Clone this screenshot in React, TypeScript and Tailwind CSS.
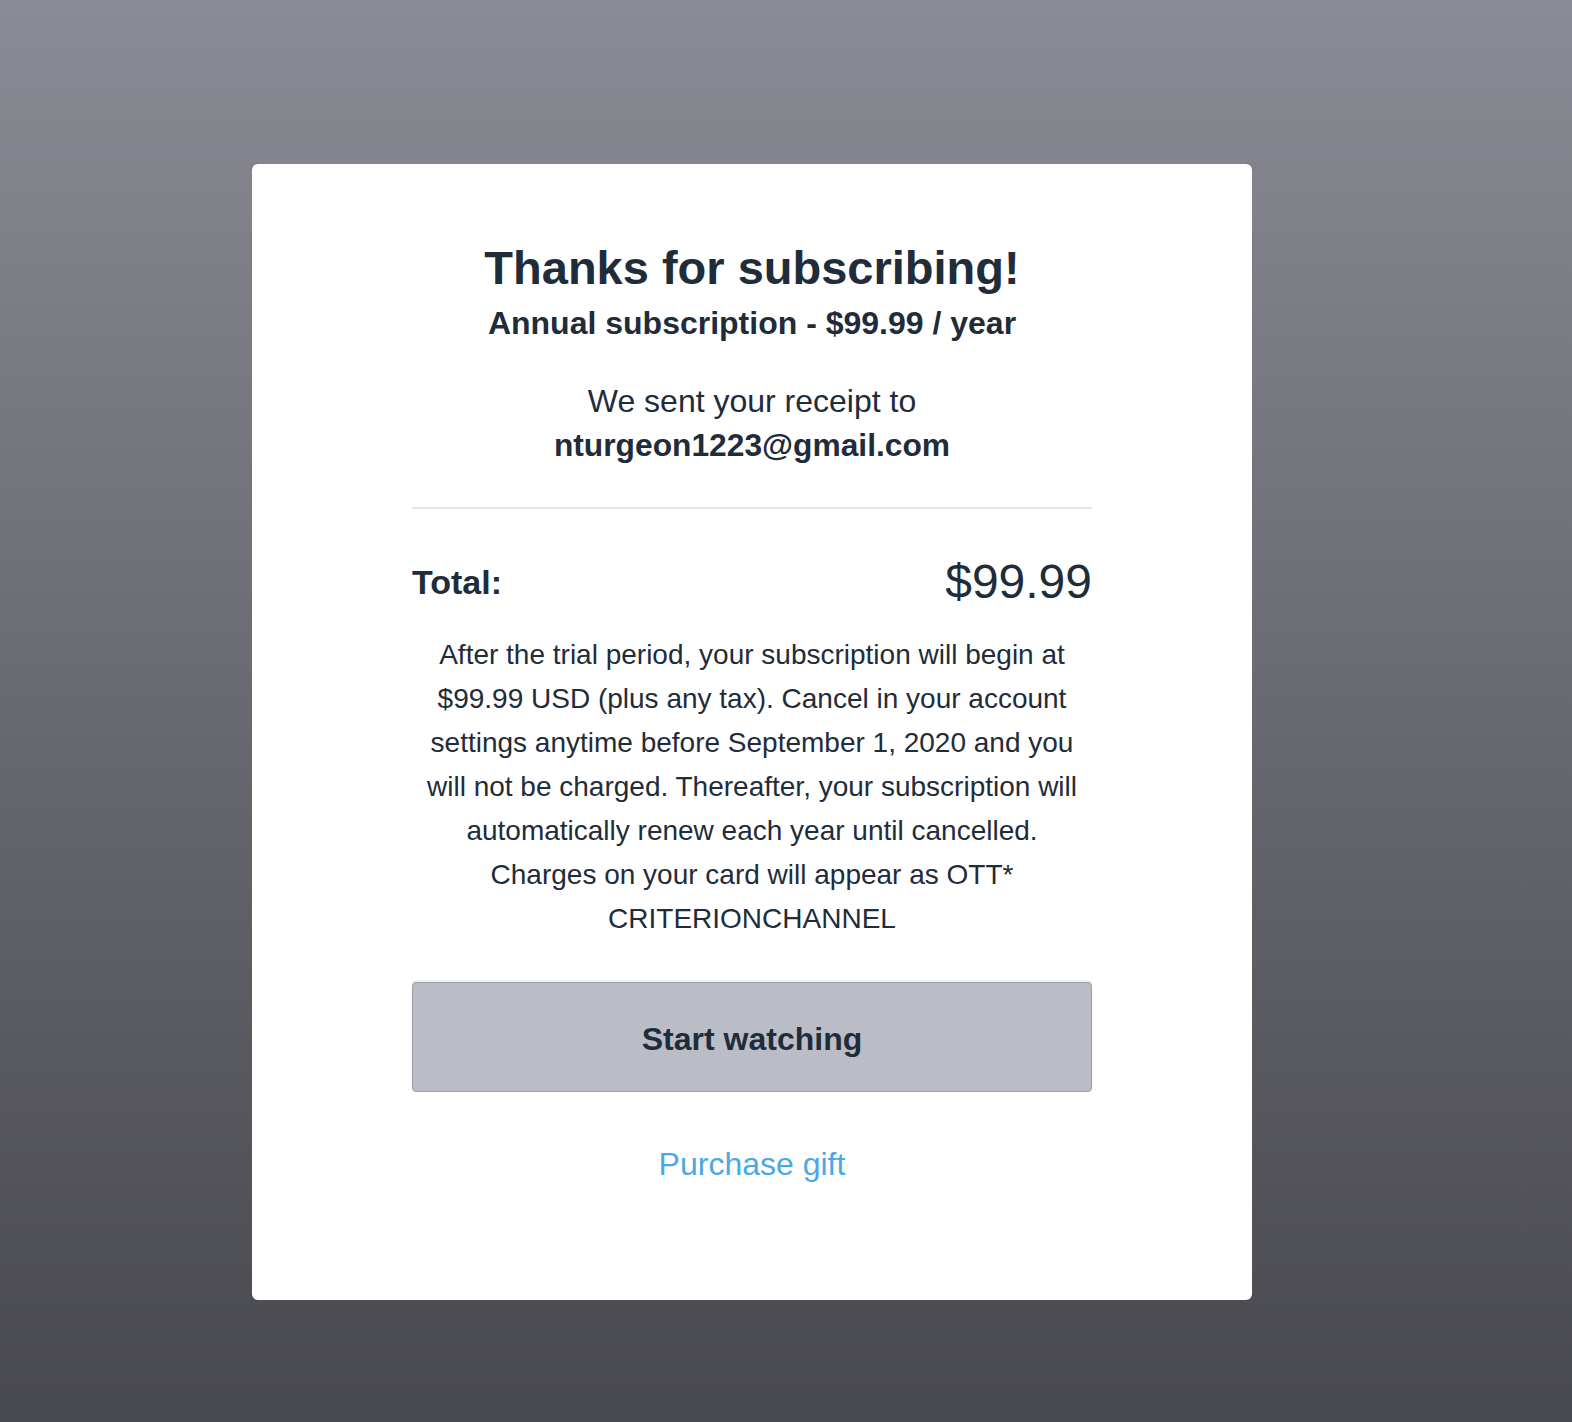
export default function App() {
  return (
    <div
      className="min-h-[1422px] w-full bg-gradient-to-b from-[#8b8b95] to-[#48494e] pt-[164px]"
      style={{ fontFamily: '"Liberation Sans", Arial, Helvetica, sans-serif' }}
    >
      <div className="ml-[252px] w-[1000px] rounded-[6px] bg-white px-[160px] pt-[76px] pb-[114px] text-[#1f2c3a]">
        {/* Header */}
        <div className="text-center">
          <h1 className="text-[47px] font-bold leading-[56px]">Thanks for subscribing!</h1>
          <h2 className="mt-[5px] text-[32px] font-bold leading-[44px]">
            Annual subscription - $99.99 / year
          </h2>
          <p className="mt-[34px] text-[32px] leading-[44px]">We sent your receipt to</p>
          <p className="text-[31.75px] font-bold leading-[44px]">nturgeon1223@gmail.com</p>
        </div>

        <div className="mt-[40px] h-[2px] bg-[#e4e8e8]" />

        {/* Total */}
        <div className="mt-[45px] flex items-center justify-between">
          <span className="text-[34px] font-bold leading-[56px]">Total:</span>
          <span className="text-[48px] leading-[56px]">$99.99</span>
        </div>

        <p className="mt-[23px] px-[8px] text-center text-[28px] leading-[44px]">
          After the trial period, your subscription will begin at $99.99 USD (plus any tax). Cancel in
          your account settings anytime before September 1, 2020 and you will not be charged.
          Thereafter, your subscription will automatically renew each year until cancelled. Charges on
          your card will appear as OTT* CRITERIONCHANNEL
        </p>

        <button className="mt-[41px] flex h-[110px] w-full items-center justify-center rounded-[4px] border border-[#9c9ea6] bg-[#babdc6] pt-[3px] text-[32px] font-bold text-[#1f2c3a] shadow-[0_-2px_0_#f1f1f1]">
          Start watching
        </button>

        <div className="mt-[50px] text-center">
          <a className="text-[32px] leading-[44px] text-[#4aa9e4]" href="#">
            Purchase gift
          </a>
        </div>
      </div>
    </div>
  );
}
